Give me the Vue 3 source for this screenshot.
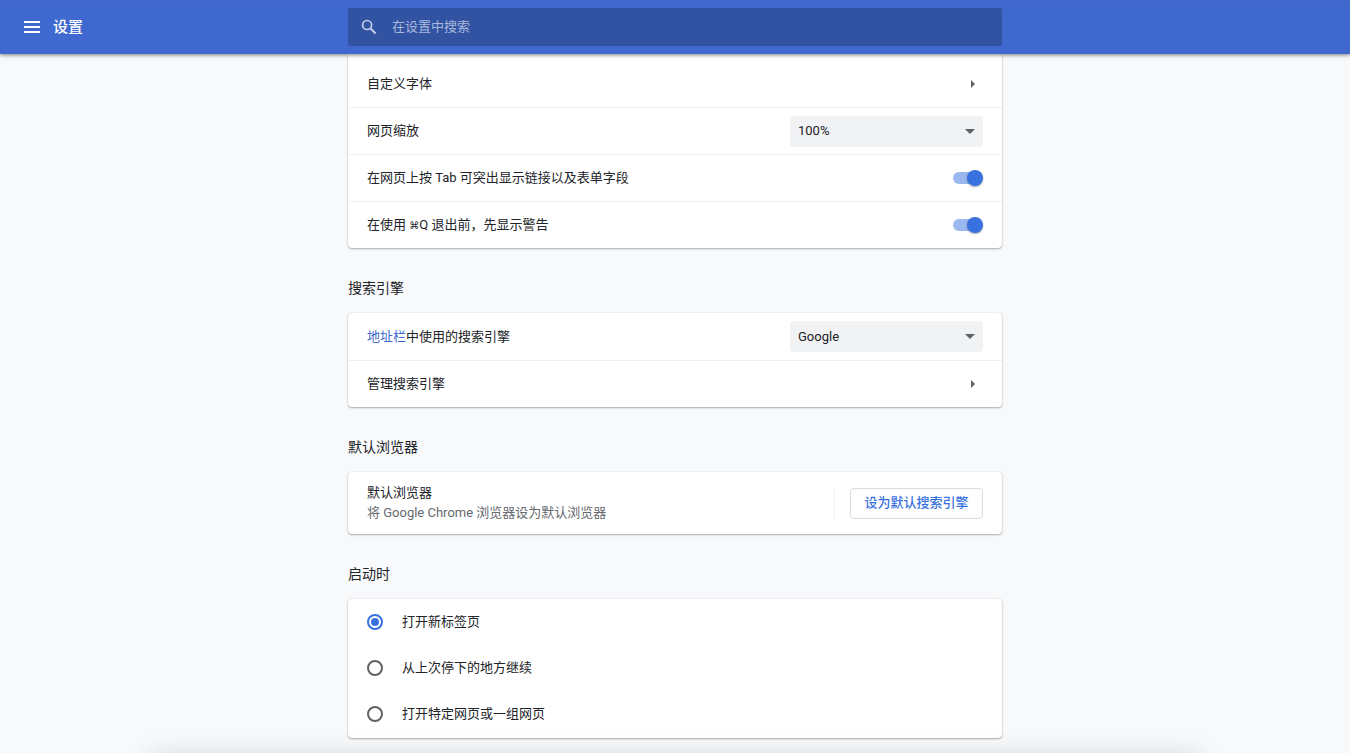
<script setup>
import { ref } from 'vue'

const query = ref('')
const zoom = ref('100%')
const engine = ref('Google')
const tabHighlight = ref(true)
const quitWarning = ref(true)
const startup = ref('newtab')

const startupOptions = [
  { value: 'newtab', label: '打开新标签页' },
  { value: 'continue', label: '从上次停下的地方继续' },
  { value: 'pages', label: '打开特定网页或一组网页' },
]
</script>

<template>
  <div class="page">
    <header class="toolbar">
      <div class="brand">
        <button class="menu" type="button" aria-label="菜单">
          <svg width="16" height="12" viewBox="0 0 16 12" aria-hidden="true">
            <path d="M0 1h16M0 6h16M0 11h16" stroke="currentColor" stroke-width="1.8" />
          </svg>
        </button>
        <h1>设置</h1>
      </div>
      <label class="search">
        <svg width="16" height="16" viewBox="0 0 16 16" aria-hidden="true">
          <circle cx="6.1" cy="6" r="4.5" fill="none" stroke="currentColor" stroke-width="1.7" />
          <path d="M9.4 9.3l5.2 5.2" stroke="currentColor" stroke-width="2" />
        </svg>
        <input v-model="query" type="search" placeholder="在设置中搜索" aria-label="在设置中搜索" />
      </label>
    </header>

    <main>
      <section class="card card-continued">
        <button class="row" type="button">
          <span>自定义字体</span>
          <svg class="chevron" width="4" height="8" viewBox="0 0 4 8" aria-hidden="true"><path d="M0 0l4 4-4 4z" /></svg>
        </button>
        <div class="row">
          <label for="zoom">网页缩放</label>
          <span class="select">
            <select id="zoom" v-model="zoom"><option>100%</option></select>
            <svg width="10" height="5" viewBox="0 0 10 5" aria-hidden="true"><path d="M0 0h10L5 5z" /></svg>
          </span>
        </div>
        <div class="row">
          <label for="tab-highlight">在网页上按 Tab 可突出显示链接以及表单字段</label>
          <input id="tab-highlight" v-model="tabHighlight" class="toggle" type="checkbox" role="switch" />
        </div>
        <div class="row">
          <label for="quit-warning">在使用 <span class="key">⌘</span>Q 退出前，先显示警告</label>
          <input id="quit-warning" v-model="quitWarning" class="toggle" type="checkbox" role="switch" />
        </div>
      </section>

      <h2>搜索引擎</h2>
      <section class="card">
        <div class="row">
          <span><a href="#">地址栏</a><label for="engine">中使用的搜索引擎</label></span>
          <span class="select">
            <select id="engine" v-model="engine"><option>Google</option></select>
            <svg width="10" height="5" viewBox="0 0 10 5" aria-hidden="true"><path d="M0 0h10L5 5z" /></svg>
          </span>
        </div>
        <button class="row" type="button">
          <span>管理搜索引擎</span>
          <svg class="chevron" width="4" height="8" viewBox="0 0 4 8" aria-hidden="true"><path d="M0 0l4 4-4 4z" /></svg>
        </button>
      </section>

      <h2>默认浏览器</h2>
      <section class="card">
        <div class="row two-line">
          <div>
            <div>默认浏览器</div>
            <div class="secondary">将 Google Chrome 浏览器设为默认浏览器</div>
          </div>
          <div class="action">
            <button class="outlined" type="button">设为默认搜索引擎</button>
          </div>
        </div>
      </section>

      <h2>启动时</h2>
      <section class="card" role="radiogroup" aria-label="启动时">
        <label v-for="option in startupOptions" :key="option.value" class="choice">
          <input v-model="startup" type="radio" name="startup" :value="option.value" />
          <span>{{ option.label }}</span>
        </label>
      </section>
    </main>

    <div class="bottom-shade"></div>
  </div>
</template>

<style>
html {
  background: #f8f9fb;
}
body {
  margin: 0;
}
</style>

<style scoped>
.page {
  min-height: 100vh;
  overflow: hidden;
  color: #212327;
  font-family: Roboto, "Noto Sans CJK SC", sans-serif;
  font-size: 13px;
  line-height: 20px;
}
button,
input,
select {
  font: inherit;
  color: inherit;
  margin: 0;
}
button {
  cursor: pointer;
}
.toolbar {
  position: relative;
  z-index: 1;
  display: grid;
  grid-template-columns: 1fr minmax(0, 654px) 1fr;
  align-items: center;
  box-sizing: border-box;
  height: 54px;
  background: #4069d0;
  box-shadow: 0 1px 4px rgba(0, 0, 0, 0.5), inset 0 1px 0 #4766c4;
  color: #fff;
}
.brand {
  display: flex;
  align-items: center;
  gap: 13px;
  padding-left: 24px;
}
.menu {
  display: flex;
  padding: 0;
  border: 0;
  background: none;
}
h1 {
  margin: 0;
  font-size: 15px;
  font-weight: 500;
}
.search {
  display: flex;
  align-items: center;
  gap: 15px;
  height: 38px;
  padding: 0 15px 0 13px;
  box-sizing: border-box;
  border-radius: 2px;
  background: #3253a2;
  color: #c3cee8;
}
.search input {
  flex: 1;
  min-width: 0;
  padding: 0;
  border: 0;
  outline: 0;
  background: none;
}
.search input::placeholder {
  color: #a9b8dc;
  opacity: 1;
}
main {
  max-width: 654px;
  margin: 0 auto;
  padding-bottom: 15px;
}
.card {
  border-radius: 4px;
  background: #fff;
  box-shadow: 0 1px 2px rgba(60, 64, 67, 0.4), 0 0 1px rgba(60, 64, 67, 0.3);
}
.card-continued {
  padding-top: 6px;
  border-radius: 0 0 4px 4px;
}
h2 {
  margin: 0;
  padding: 30px 0 15px;
  font-size: 14px;
  font-weight: 400;
}
.row {
  display: flex;
  align-items: center;
  justify-content: space-between;
  box-sizing: border-box;
  width: 100%;
  height: 47px;
  padding: 0 19px;
  border: 0;
  background: none;
  text-align: left;
}
.row + .row {
  border-top: 1px solid #f0f0f2;
}
.row a {
  color: #4069d0;
  text-decoration: none;
}
.key {
  font-family: "DejaVu Sans", sans-serif;
  font-size: 10px;
  line-height: 1;
}
.chevron {
  margin-right: 8px;
  fill: #5f6368;
}
.select {
  position: relative;
  display: flex;
  width: 193px;
}
.select select {
  appearance: none;
  width: 100%;
  height: 31px;
  padding: 0 24px 0 8px;
  border: 0;
  border-radius: 4px;
  background: #f1f2f4;
}
.select svg {
  position: absolute;
  top: 13px;
  right: 8px;
  fill: #5f6368;
  pointer-events: none;
}
.toggle {
  appearance: none;
  position: relative;
  width: 30px;
  height: 16px;
}
.toggle::before {
  content: "";
  position: absolute;
  inset: 2px 3px 2px 0;
  border-radius: 6px;
  background: #c4c7cb;
}
.toggle::after {
  content: "";
  position: absolute;
  top: 0;
  left: 0;
  width: 16px;
  height: 16px;
  border-radius: 50%;
  background: #fff;
  box-shadow: 0 1px 2px rgba(0, 0, 0, 0.35);
}
.toggle:checked::before {
  background: #9bb7ef;
}
.toggle:checked::after {
  left: auto;
  right: 0;
  background: #3872e0;
}
.two-line {
  height: 62px;
}
.secondary {
  color: #66696e;
}
.action {
  padding-left: 15px;
  border-left: 1px solid #f0f0f2;
}
.outlined {
  display: block;
  min-width: 133px;
  height: 31px;
  padding: 0 13px;
  border: 1px solid #dadce0;
  border-radius: 4px;
  background: #fff;
  color: #3872e0;
  font-weight: 500;
}
.choice {
  display: flex;
  align-items: center;
  gap: 19px;
  height: 46px;
  padding: 0 19px;
}
.choice:last-child {
  padding-bottom: 1px;
}
.choice input {
  appearance: none;
  display: grid;
  place-items: center;
  box-sizing: border-box;
  width: 16px;
  height: 16px;
  border: 2px solid #5f6368;
  border-radius: 50%;
}
.choice input:checked {
  border-color: #3872e0;
}
.choice input:checked::before {
  content: "";
  width: 8px;
  height: 8px;
  border-radius: 50%;
  background: #3872e0;
}
.bottom-shade {
  position: fixed;
  right: 11%;
  bottom: -40px;
  left: 11%;
  height: 40px;
  box-shadow: 0 0 24px rgba(0, 0, 0, 0.12);
  pointer-events: none;
}
</style>
